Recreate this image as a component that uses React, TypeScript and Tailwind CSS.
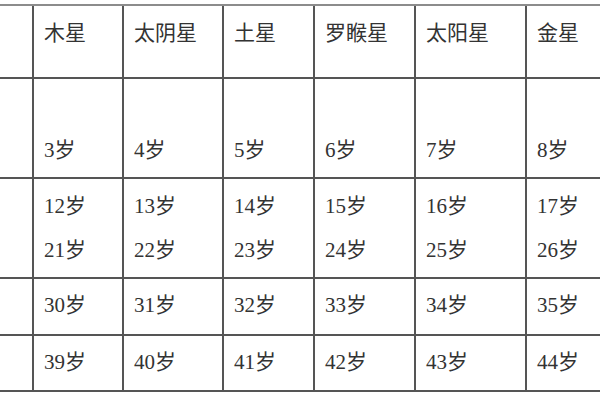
import React from "react";

const headers = ["木星", "太阴星", "土星", "罗睺星", "太阳星", "金星"];
const row2 = ["3岁", "4岁", "5岁", "6岁", "7岁", "8岁"];
const row3 = [
  ["12岁", "21岁"],
  ["13岁", "22岁"],
  ["14岁", "23岁"],
  ["15岁", "24岁"],
  ["16岁", "25岁"],
  ["17岁", "26岁"],
];
const row4 = ["30岁", "31岁", "32岁", "33岁", "34岁", "35岁"];
const row5 = ["39岁", "40岁", "41岁", "42岁", "43岁", "44岁"];

function Cell({
  children,
  last,
  pad,
}: {
  children?: React.ReactNode;
  last?: boolean;
  pad: string;
}) {
  return (
    <div
      className={
        "border-b-2 border-[#555555] pl-[10px] overflow-hidden whitespace-nowrap " +
        (last ? "" : "border-r-2 ") +
        pad
      }
    >
      {children}
    </div>
  );
}

export default function App() {
  return (
    <div
      className="w-[600px] h-[400px] bg-white overflow-hidden pt-[4px] text-[21px] leading-[24px] text-[#333333]"
      style={{ fontFamily: '"Liberation Serif", "Noto Sans CJK SC", serif' }}
    >
      <div className="grid grid-cols-[34px_90px_100px_91px_101px_111px_1fr] grid-rows-[73px_100px_100px_57px_56px] border-t-2 border-[#8c8c8c] w-[640px]">
        {/* Row 1 */}
        <Cell pad="pt-[15px]" />
        {headers.map((h, i) => (
          <Cell key={h} pad="pt-[15px]" last={i === headers.length - 1}>
            {h}
          </Cell>
        ))}
        {/* Row 2 */}
        <Cell pad="pt-[59px]" />
        {row2.map((t, i) => (
          <Cell key={t} pad="pt-[59px]" last={i === row2.length - 1}>
            {t}
          </Cell>
        ))}
        {/* Row 3 */}
        <Cell pad="pt-[15px]" />
        {row3.map((pair, i) => (
          <Cell key={pair[0]} pad="pt-[15px]" last={i === row3.length - 1}>
            <div className="flex flex-col gap-[20px]">
              <span>{pair[0]}</span>
              <span>{pair[1]}</span>
            </div>
          </Cell>
        ))}
        {/* Row 4 */}
        <Cell pad="pt-[14px]" />
        {row4.map((t, i) => (
          <Cell key={t} pad="pt-[14px]" last={i === row4.length - 1}>
            {t}
          </Cell>
        ))}
        {/* Row 5 */}
        <Cell pad="pt-[14px]" />
        {row5.map((t, i) => (
          <Cell key={t} pad="pt-[14px]" last={i === row5.length - 1}>
            {t}
          </Cell>
        ))}
      </div>
    </div>
  );
}
